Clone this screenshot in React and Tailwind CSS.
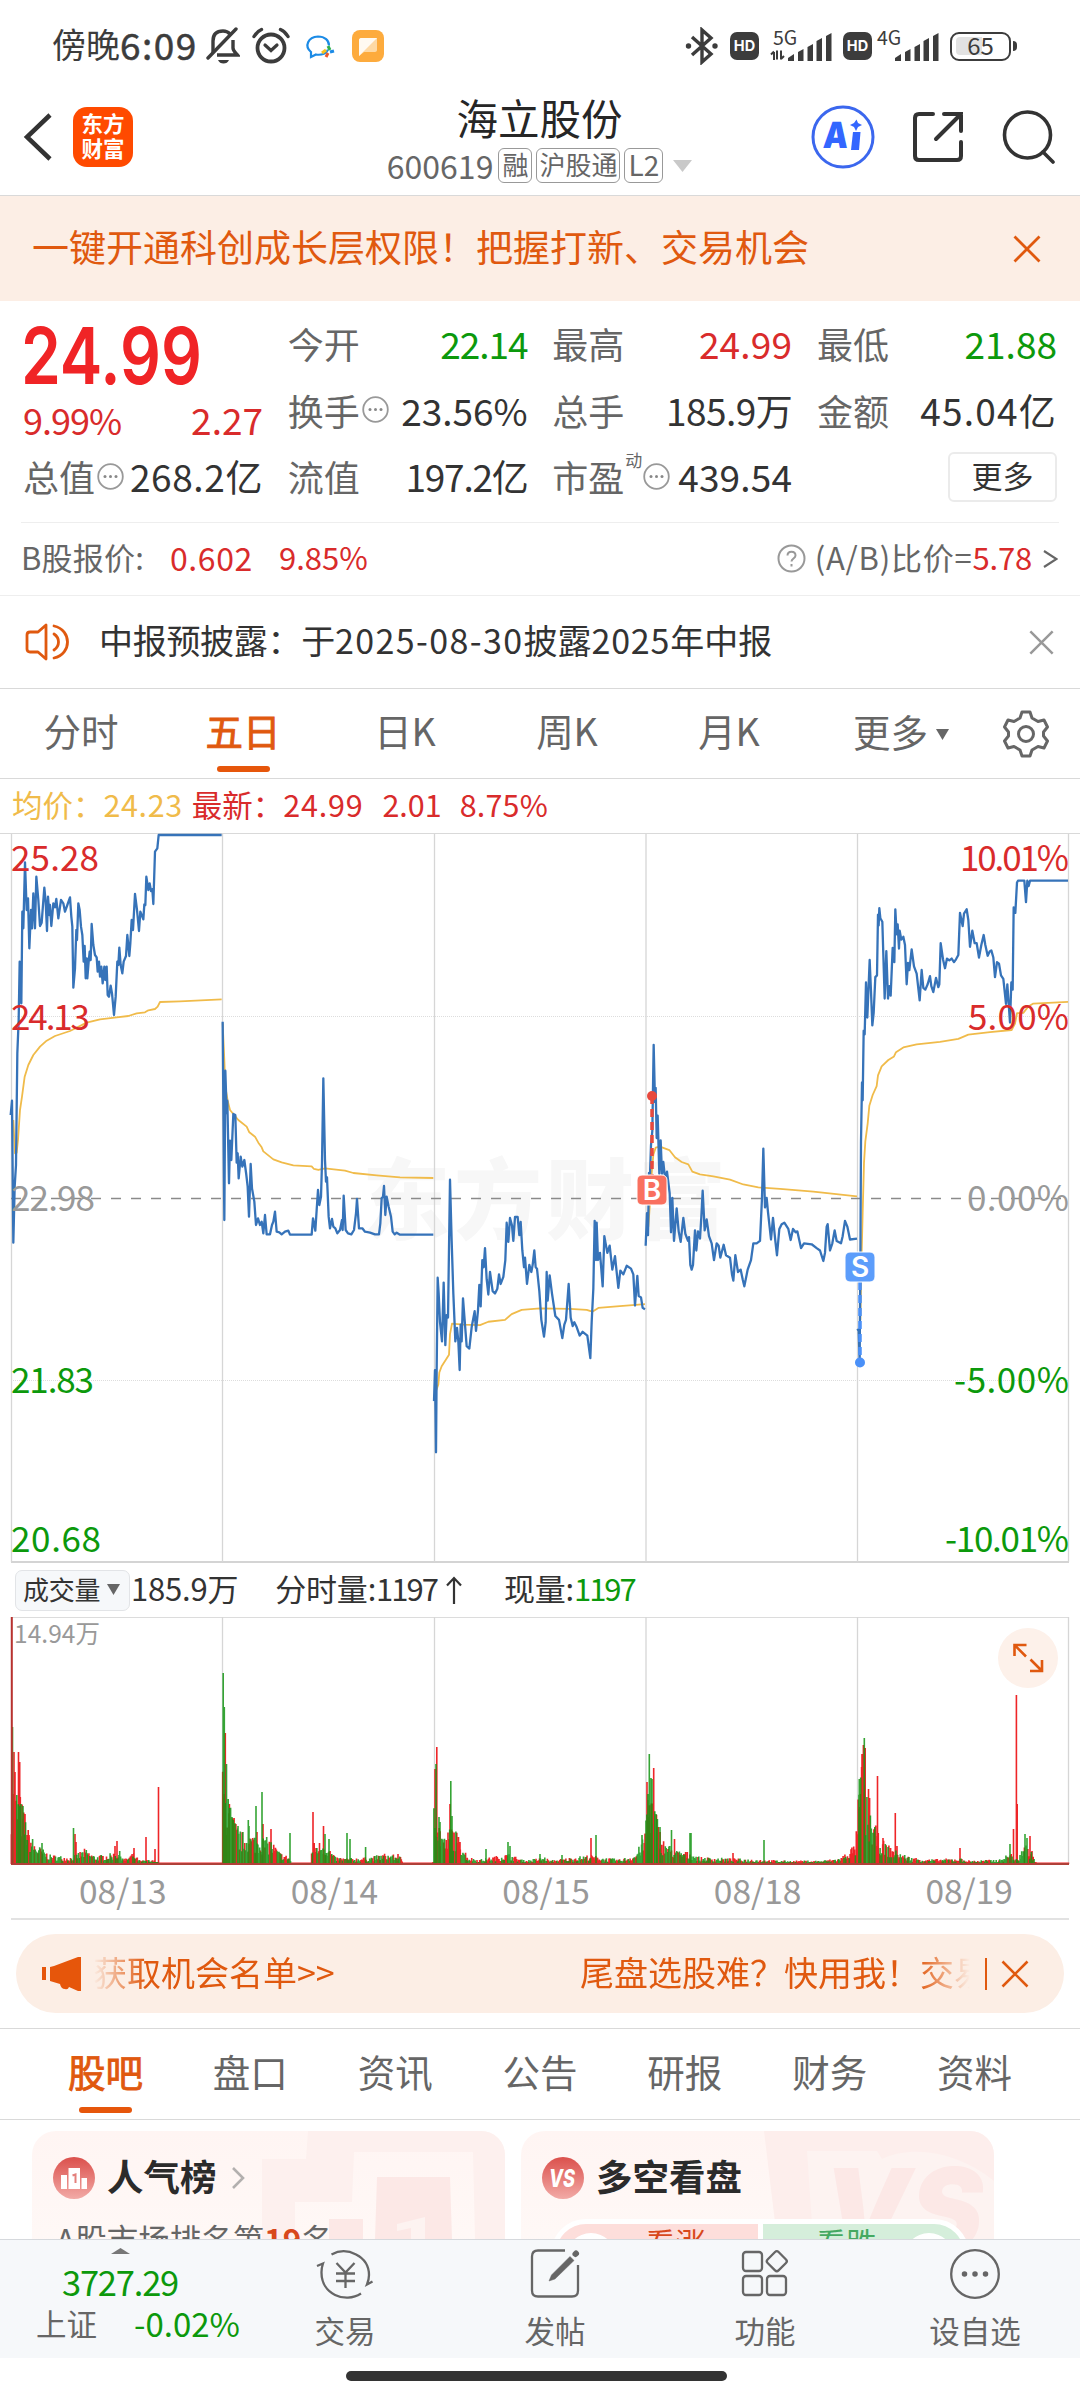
import React from "react";

const RED = "#d92b2b";
const GREEN = "#0c990c";
const GRAY = "#999999";

// Every session is traced in its own units, transform puts it on the 1080 wide chart
const sessions = [
  {
    date: "08/13",
    transform: "translate(0 820) scale(0.33333 0.33333)",
    price:
      "32,885 36,842 40,1268 44,1100 48,1035 52,700 56,600 59,425 64,550 67,275 70,325 75,127 80,270 84,235 88,385 93,270 96,325 100,220 105,325 109,170 115,240 120,318 125,308 133,203 137,245 141,333 144,230 148,285 150,255 154,318 160,250 165,262 169,237 175,295 183,240 190,250 195,275 202,255 210,232 214,290 217,320 220,503 225,445 229,330 231,360 235,250 239,270 243,320 247,345 251,425 254,378 257,475 260,415 262,475 266,425 269,395 272,420 275,312 280,375 285,405 290,412 293,455 297,425 300,470 304,440 308,490 313,440 316,480 320,440 323,525 327,530 332,497 336,520 342,585 347,530 352,425 355,435 358,383 362,435 367,460 371,425 378,408 382,345 388,408 391,370 395,300 399,330 405,222 411,270 417,333 421,275 430,298 433,253 436,255 439,170 445,210 449,190 453,213 457,208 460,252 465,95 472,85 476,45 665,45",
    avg: "40,900 45,1000 50,998 54,960 60,870 66,830 74,770 85,735 100,705 120,680 140,662 165,648 210,633 260,608 300,598 350,592 385,588 410,580 435,577 445,571 465,567 473,560 480,546 540,544 665,538",
  },
  {
    date: "08/14",
    transform: "translate(0 820) scale(0.33333 0.33333)",
    price:
      "668,605 673,1200 676,752 680,880 682,842 687,1090 690,962 694,1020 700,882 706,885 710,1028 713,1000 716,1075 722,1010 727,1040 733,1020 739,1065 743,1100 747,1190 752,1032 756,1105 763,1145 768,1215 774,1195 780,1215 785,1205 790,1240 795,1185 800,1243 810,1243 816,1215 820,1205 825,1175 830,1235 838,1237 845,1243 855,1235 865,1232 870,1244 935,1244 939,1195 946,1232 950,1170 954,1110 958,1155 963,1130 966,1030 970,775 975,1020 978,1085 981,1072 986,1190 990,1225 996,1197 1000,1220 1006,1225 1012,1240 1020,1230 1026,1200 1028,1230 1031,1127 1037,1230 1044,1240 1054,1243 1062,1230 1068,1180 1071,1137 1077,1225 1087,1225 1095,1235 1110,1238 1125,1243 1137,1243 1141,1210 1145,1135 1149,1130 1152,1098 1156,1185 1160,1130 1166,1160 1173,1190 1178,1235 1184,1243 1190,1238 1200,1244 1300,1244",
    avg: "668,610 673,720 676,800 683,842 690,870 700,882 715,900 740,920 748,937 765,950 775,968 785,982 790,994 820,1018 845,1027 880,1036 935,1039 942,1047 955,1050 975,1045 1035,1052 1060,1059 1130,1066 1200,1072 1300,1074",
  },
  {
    date: "08/15",
    transform: "translate(430 820) scale(0.33333 0.47832)",
    price:
      "12,1215 15,1150 18,1322 20,1150 23,957 26,990 30,1050 36,1090 41,967 46,1098 50,1035 54,1040 60,752 65,880 70,990 76,1090 81,1062 85,1090 89,1150 92,1055 95,1090 99,1000 105,1055 110,1100 118,1105 125,1060 134,1027 138,1068 144,1025 148,972 152,1017 157,920 161,935 165,895 170,960 175,992 180,945 188,985 195,990 202,980 207,950 212,970 220,955 226,920 230,842 235,882 240,832 246,848 250,880 255,830 263,830 268,868 272,840 277,900 282,935 285,915 291,970 298,930 304,945 308,930 313,900 317,935 321,938 328,985 334,1045 342,1080 347,1050 350,945 353,1005 359,952 366,990 376,1037 387,1045 397,1083 403,1055 408,1045 416,970 422,1040 428,1058 433,1050 440,1060 449,1078 458,1070 472,1078 481,1125 485,1050 490,980 494,838 498,920 500,842 504,920 510,905 518,975 523,870 532,905 539,890 547,940 555,912 565,978 571,942 580,950 590,932 603,938 610,950 615,1015 622,953 626,995 633,998 638,1020 645,1023",
    avg: "14,1200 20,1190 25,1180 28,1155 35,1142 48,1128 57,1118 60,1075 66,1053 100,1055 150,1056 175,1049 225,1045 245,1033 275,1024 330,1021 420,1022 470,1024 487,1028 505,1020 560,1017 645,1012",
  },
  {
    date: "08/18",
    transform: "translate(430 820) scale(0.33333 0.47832)",
    price:
      "647,890 651,822 654,868 657,738 660,740 663,680 667,650 671,470 675,590 677,560 680,665 683,618 688,740 692,670 696,740 700,715 706,755 711,735 719,780 723,862 727,790 732,880 740,812 746,860 752,882 760,832 766,865 774,880 777,872 781,930 785,940 789,930 795,858 799,900 804,860 810,875 814,830 818,775 824,858 830,835 837,870 845,885 852,920 860,885 866,890 871,915 881,888 888,910 900,915 906,950 910,963 916,910 924,945 932,940 938,960 943,975 953,940 963,920 970,885 980,885 990,880 996,790 1000,687 1005,810 1010,790 1014,820 1023,877 1029,832 1036,880 1041,910 1048,855 1055,845 1063,842 1075,855 1082,878 1089,855 1097,862 1102,860 1113,895 1122,885 1145,887 1160,895 1170,900 1180,922 1185,905 1190,850 1193,845 1200,900 1207,885 1214,858 1220,880 1233,885 1238,870 1245,838 1252,850 1260,877 1281,875",
    avg: "655,850 660,800 665,740 670,700 677,685 690,683 718,690 735,705 755,715 775,720 787,735 810,741 850,745 900,752 940,762 985,768 1050,771 1150,777 1281,787",
  },
  {
    date: "08/19",
    transform: "translate(640 820) scale(0.33333 0.35714)",
    price:
      "652,1425 656,1430 659,1515 661,1250 663,900 666,735 668,785 671,590 674,600 678,455 682,553 689,392 693,480 697,575 701,540 706,440 711,435 714,265 716,295 718,247 721,275 727,285 734,500 739,367 744,500 748,465 752,492 758,358 763,398 766,250 770,320 773,292 777,360 779,310 784,335 790,327 795,350 800,460 804,400 808,420 815,362 822,410 830,430 839,505 845,420 850,470 856,475 863,460 870,437 874,465 880,482 888,442 895,468 898,460 902,345 909,390 915,415 921,388 928,393 935,388 942,398 948,390 955,378 960,260 968,297 972,262 980,250 985,280 990,355 997,310 1004,345 1010,345 1017,385 1024,350 1031,322 1036,350 1043,380 1049,368 1054,365 1060,385 1065,440 1071,398 1077,402 1083,435 1090,445 1098,515 1102,460 1110,567 1114,455 1118,475 1121,245 1126,260 1131,175 1134,170 1153,170 1158,230 1162,170 1166,185 1170,170 1284,170",
    avg: "661,1400 664,1250 668,1100 672,960 676,900 683,850 688,800 698,770 710,745 714,715 725,690 745,672 762,662 768,650 790,637 830,628 900,621 955,613 985,601 1050,594 1115,588 1125,570 1131,541 1150,540 1165,522 1180,514 1284,509",
  },
];

const axisLabels = [
  { y: 871, left: "25.28", leftWidth: 88, right: "10.01%", rightWidth: 109, color: RED },
  { y: 1030, left: "24.13", leftWidth: 79, right: "5.00%", rightWidth: 101, color: RED },
  { y: 1211, left: "22.98", leftWidth: 84, right: "0.00%", rightWidth: 102, color: GRAY },
  { y: 1393, left: "21.83", leftWidth: 83, right: "-5.00%", rightWidth: 115, color: GREEN },
  { y: 1552, left: "20.68", leftWidth: 90, right: "-10.01%", rightWidth: 124, color: GREEN },
];

// [x, height] outline of the small volume bars
const volumeShape = [
  [11, 75], [20, 60], [28, 30], [35, 18], [50, 8], [70, 6], [85, 13], [95, 7], [110, 9], [120, 11], [125, 4], [133, 10], [140, 3], [152, 4], [159, 1], [222, 1],
  [222.5, 80], [232, 45], [240, 28], [260, 24], [270, 22], [280, 10], [290, 6], [291, 1], [311, 1], [312, 18], [325, 20], [335, 6], [350, 5], [370, 6], [385, 9], [400, 7], [403, 1], [433, 1],
  [434, 80], [438, 40], [445, 22], [452, 35], [462, 18], [468, 6], [480, 4], [508, 9], [525, 3], [545, 6], [550, 3], [590, 8], [600, 6], [620, 4], [635, 8], [645, 25],
  [646, 60], [650, 70], [655, 50], [662, 22], [675, 12], [690, 10], [700, 6], [730, 5], [760, 4], [780, 3], [820, 3], [840, 5], [856, 18],
  [857, 50], [862, 90], [868, 50], [880, 22], [895, 12], [910, 6], [930, 4], [960, 5], [970, 3], [1000, 4], [1010, 10], [1018, 3], [1024, 20], [1033, 8], [1036, 1], [1069, 1],
];

// [x, height, r | g]
const volumeSpikes = [
  [12.5, 137, "g"], [14, 112, "r"], [15, 92, "r"], [18.5, 112, "r"], [19.7, 102, "r"], [21, 60, "g"], [23, 58, "g"], [25, 50, "r"], [27, 29, "r"], [29, 29, "r"], [42, 21, "g"], [73.5, 36, "g"], [75, 30, "r"], [76, 22, "r"], [117, 23, "r"], [115, 18, "r"], [134, 16, "r"], [146, 27, "r"], [155, 15, "r"], [158.5, 77, "r"],
  [223.2, 191, "g"], [224.3, 157, "g"], [225.3, 131, "r"], [226.5, 100, "g"], [228.2, 65, "g"], [229.4, 60, "r"], [232, 47, "g"], [238, 38, "g"], [248.3, 44, "g"], [249, 38, "g"], [256, 58, "g"], [257, 32, "r"], [262, 72, "g"], [263, 40, "r"], [271, 35, "r"], [290, 31, "g"], [313, 52, "r"], [323.5, 38, "r"], [325, 30, "g"], [329, 25, "g"], [347, 31, "g"], [350, 25, "g"], [365.6, 17, "g"], [398, 10, "r"],
  [435, 95, "r"], [436, 100, "g"], [436.8, 117, "r"], [439, 47, "g"], [440, 42, "g"], [450.8, 83, "g"], [450, 60, "r"], [452, 48, "g"], [460, 22, "r"], [486, 15, "g"], [508, 22, "g"], [510, 18, "g"], [540, 10, "g"], [562, 9, "g"], [591, 26, "r"], [596, 29, "g"], [642, 29, "g"], [645, 30, "r"],
  [647, 82, "r"], [648, 70, "g"], [649.3, 110, "g"], [651, 86, "g"], [652, 85, "g"], [653.7, 96, "r"], [656, 50, "g"], [660, 37, "g"], [671.5, 34, "g"], [674.5, 25, "r"], [690, 31, "g"], [691, 31, "g"], [733, 11, "r"], [764, 24, "g"],
  [858.5, 55, "r"], [859.3, 85, "g"], [860.5, 70, "r"], [862, 110, "r"], [863.4, 119, "r"], [864.3, 126, "g"], [865.2, 116, "r"], [868.5, 75, "r"], [869.6, 66, "r"], [875, 36, "r"], [877.5, 88, "r"], [883, 26, "r"], [895.3, 51, "r"], [897, 18, "r"], [960, 16, "r"], [1010, 20, "g"], [1013.5, 35, "r"], [1016.4, 169, "r"], [1017.2, 60, "r"], [1025, 30, "g"], [1027, 26, "g"], [1030, 28, "r"], [1032, 13, "r"],
];

const volumeHeight = (x) => {
  for (let i = 1; i < volumeShape.length; i++) {
    const [x0, h0] = volumeShape[i - 1];
    const [x1, h1] = volumeShape[i];
    if (x <= x1) return h0 + ((h1 - h0) * (x - x0)) / (x1 - x0 || 1);
  }
  return 1;
};

const buildVolume = () => {
  const bars = { r: "", g: "" };
  let seed = 7;
  const random = () => {
    seed = (seed * 16807) % 2147483647;
    return seed / 2147483647;
  };
  for (let x = 11.5; x < 1069; x += 0.88) {
    const base = volumeHeight(x);
    const flat = base <= 1.2;
    const height = flat ? 1.5 : Math.max(2, base * (0.4 + random() * 0.8));
    const color = flat || random() > 0.5 ? "r" : "g";
    bars[color] += `M${x.toFixed(1)} 1864V${(1864 - height).toFixed(1)}`;
  }
  volumeSpikes.forEach(([x, height, color]) => {
    bars[color] += `M${x} 1864V${1864 - height}`;
  });
  return bars;
};

const volume = buildVolume();
const gridX = [11.5, 222.5, 434.5, 646, 857.5, 1068.5];

const MoreDots = () => (
  <svg width="27" height="27" viewBox="0 0 27 27" fill="none" className="ml-[2px] shrink-0">
    <circle cx="13.5" cy="13.5" r="12.3" stroke="#999" strokeWidth="1.8" />
    <circle cx="8" cy="13.5" r="1.5" fill="#888" />
    <circle cx="13.5" cy="13.5" r="1.5" fill="#888" />
    <circle cx="19" cy="13.5" r="1.5" fill="#888" />
  </svg>
);

const Close = ({ size, color, width = 2.6 }) => (
  <svg width={size} height={size} viewBox="0 0 28 28" fill="none" stroke={color} strokeWidth={width}>
    <path d="M1.5 1.5 26.5 26.5M26.5 1.5 1.5 26.5" />
  </svg>
);

const Signal = ({ label, data }) => (
  <svg width="62" height="36" viewBox="0 0 62 36" fill="#3c3c3c" className="overflow-visible">
    <text x={data ? 3 : 0} y="16.5" fontSize="19.5" className="font-['Noto_Sans_CJK_SC']">
      {label}
    </text>
    {data && <path d="M4 24v8M7 22.5v9M11 22.5v9M1 26.500l3-3M11 31l3-3" stroke="#3c3c3c" strokeWidth="2" />}
    <path d="M18 33v-3l6-4v7zM28 33v-9l5.500-3v12zM37.500 33V19l5.500-3v17zM46.500 33V13l5.500-3v23zM56 33V8l5.500-3v28z" />
  </svg>
);

const HdBadge = () => (
  <span className="flex h-[28px] w-[29px] items-center justify-center rounded-[7px] bg-[#3c3c3c] font-['Inter'] text-[14.5px] leading-none font-bold text-white">
    HD
  </span>
);

const StatusBar = () => (
  <div className="flex h-[92px] items-center justify-between pr-[63px] pl-[52px] text-[#3c3c3c]">
    <div className="flex items-center">
      <span className="pb-[4px] text-[34px] leading-none">傍晚</span>
      <span className="pb-[3px] text-[37px] leading-none tracking-[1.500px] [-webkit-text-stroke:0.500px]">6:09</span>
      <svg width="34" height="38" viewBox="0 0 34 38" fill="none" stroke="#3c3c3c" strokeWidth="3.400" className="ml-[8px]">
        <path d="M7 26V14C7 7 11 4 17 4c3 0 5 .8 7 3M27 13v8c0 3 3 5 4.500 7H11" />
        <path d="M30 2 2 31" strokeLinecap="round" />
        <path d="M12 33h11c-1 2.500-3 3.500-5.500 3.500S13 35.500 12 33z" fill="#3c3c3c" stroke="none" />
      </svg>
      <svg width="38" height="38" viewBox="0 0 38 38" fill="none" stroke="#3c3c3c" className="ml-[12px]">
        <circle cx="19" cy="21" r="13.500" strokeWidth="3.800" />
        <path d="m13 18 6 5.500L25 18" strokeWidth="3.200" strokeLinecap="round" />
        <path d="M2 9.500C4 6 6 4 9.500 2.500M36 9.500C34 6 32 4 28.500 2.500" strokeWidth="3.400" strokeLinecap="round" />
      </svg>
      <svg width="34" height="34" viewBox="0 0 34 34" fill="none" className="ml-[14px]">
        <path d="M24 20.500C23 24 18 26.500 12 25.500L7 28V23C0 17 4 8 14 7.500c7 0 11 4 11 9" stroke="#1c8be6" strokeWidth="2.200" />
        <path d="m24 17 2 4" stroke="#2fae4e" strokeWidth="3" />
        <path d="m18 24 4-3" stroke="#f6c21c" strokeWidth="3" />
        <path d="m22 28 2-4" stroke="#ee5a28" strokeWidth="3" />
        <path d="m26 23 4-1" stroke="#1c8be6" strokeWidth="3" />
      </svg>
      <svg width="32" height="32" viewBox="0 0 32 32" className="ml-[14px]">
        <rect width="32" height="32" rx="8" fill="#fdab3d" />
        <path d="M9 8h16v12c0 1-1 2-2 2H12l-5 4V10c0-1 1-2 2-2z" fill="#fed9a4" />
        <path d="M9 8h16L7 26V10c0-1 1-2 2-2z" fill="#fffaf2" />
      </svg>
    </div>
    <div className="flex items-center">
      <svg width="34" height="38" viewBox="0 0 34 38" fill="none" stroke="#3c3c3c" strokeWidth="3.400">
        <path d="m7 10 19 17-9 8V3l9 8L7 28" />
        <circle cx="3.500" cy="19" r="2.700" fill="#3c3c3c" stroke="none" />
        <circle cx="30" cy="19" r="2.700" fill="#3c3c3c" stroke="none" />
      </svg>
      <span className="mr-[11px] ml-[11px]">
        <HdBadge />
      </span>
      <Signal label="5G" data />
      <span className="mr-[5px] ml-[11px]">
        <HdBadge />
      </span>
      <Signal label="4G" />
      <div className="relative ml-[11px] flex h-[29px] w-[61px] items-center justify-center rounded-[9px] border-[2.500px] border-[#3c3c3c]">
        <span className="absolute top-[3px] left-[4px] h-[18px] w-[26px] rounded-l-[4px] bg-[#e2e2e2]" />
        <span className="relative pb-[3px] text-[24px] leading-none">65</span>
      </div>
      <span className="ml-[2px] h-[10px] w-[4px] rounded-r bg-[#3c3c3c]" />
    </div>
  </div>
);

const Header = () => (
  <div className="grid h-[104px] grid-cols-[1fr_auto_1fr] items-center border-b border-[#d9d9d9] pr-[24px] pl-[23px]">
    <div className="flex items-center pb-[14px]">
      <svg width="29" height="48" viewBox="0 0 29 48" fill="none" stroke="#333" strokeWidth="4.500">
        <path d="M27 2 4 24l23 22" />
      </svg>
      <div className="ml-[21px] flex h-[60px] w-[60px] flex-col items-center justify-center rounded-[14px] bg-[#ff4a00] pb-[3px] text-[21.500px] leading-[25px] font-bold text-white">
        <span>东方</span>
        <span>财富</span>
      </div>
    </div>
    <div className="flex flex-col items-center pb-[14px]">
      <h1 className="text-[41.500px] leading-[50px] text-[#262626]">海立股份</h1>
      <div className="mt-[6px] -mb-[2px] flex items-center text-[#666]">
        <span className="pb-[1px] text-[32px] leading-[34px]">600619</span>
        <span className="ml-[5px] flex h-[35px] items-center rounded-[6px] border-[1.500px] border-[#999] px-[3px] pb-[3px] text-[26px] leading-none">融</span>
        <span className="ml-[4px] flex h-[35px] items-center rounded-[6px] border-[1.500px] border-[#999] px-[2px] pb-[3px] text-[26px] leading-none">沪股通</span>
        <span className="ml-[4px] flex h-[35px] items-center rounded-[6px] border-[1.500px] border-[#999] px-[3px] pb-[3px] text-[28px] leading-none">L2</span>
        <svg width="19" height="12" viewBox="0 0 19 12" fill="#c9c9c9" className="ml-[10px]">
          <path d="M0 0h19l-9.500 12z" />
        </svg>
      </div>
    </div>
    <div className="flex items-center justify-end pb-[14px]">
      <svg width="64" height="64" viewBox="0 0 64 64">
        <circle cx="32" cy="32" r="30" fill="none" stroke="#3b67ee" strokeWidth="3" />
        <g transform="skewX(-4)">
          <text x="14.500" y="43.500" fontSize="36" textLength="25" lengthAdjust="spacingAndGlyphs" className="font-['Inter'] font-black" fill="#3366ff">
            A
          </text>
        </g>
        <path d="M42 27h7.500l-1.500 18h-8z" fill="#3366ff" />
        <path d="m45.500 14.500 1.500 3.500 4 2-4 2-2 4-2-4-4-2 4-2z" fill="#3366ff" />
      </svg>
      <svg width="52" height="52" viewBox="0 0 52 52" fill="none" stroke="#333" strokeWidth="4" className="ml-[37px]">
        <path d="M21 3H7Q3 3 3 7v38q0 4 4 4h38q4 0 4-4V31M32 3h17v17M49 3 24 28" strokeLinecap="round" />
      </svg>
      <svg width="54" height="54" viewBox="0 0 54 54" fill="none" stroke="#333" strokeWidth="3.600" className="ml-[38px]">
        <circle cx="25.500" cy="25" r="23" />
        <path d="m41 42 10 10" strokeLinecap="round" />
      </svg>
    </div>
  </div>
);

const Stat = ({ label, value, className = "text-[#333]", icon, sup }) => (
  <div className="flex items-center justify-between">
    <span className="flex items-center text-[#666]">
      {label}
      {sup && <sup className="-top-[17px] -mr-[1px] ml-[1px] text-[17px] leading-none">{sup}</sup>}
      {icon && <MoreDots />}
    </span>
    <span className={`text-[37px] ${className}`}>{value}</span>
  </div>
);

const Quote = () => (
  <div className="h-[221px] px-[23px] pt-[9px]">
    <div className="grid grid-cols-[240px_240px_240px_240px] justify-between text-[36px] leading-[66px]">
      <div className="row-span-2 flex flex-col">
        <div className="h-[85px]">
          <span className="-ml-[2px] inline-block origin-left scale-x-[0.82] font-['Inter'] text-[78px] leading-[92px] font-semibold text-[#f02426]">
            24.99
          </span>
        </div>
        <div className="flex h-[48px] items-center justify-between leading-[48px] text-[#d92b2b]">
          <span className="tracking-[-1px]">9.99%</span>
          <span className="text-[37px]">2.27</span>
        </div>
      </div>
      <Stat label="今开" value="22.14" className="tracking-[-1px] text-[#0c990c]" />
      <Stat label="最高" value="24.99" className="tracking-[0.200px] text-[#d92b2b]" />
      <Stat label="最低" value="21.88" className="text-[#0c990c]" />
      <Stat label="换手" value="23.56%" className="text-[#333]" icon />
      <Stat label="总手" value="185.9万" className="tracking-[-0.500px] text-[#333]" />
      <Stat label="金额" value="45.04亿" className="tracking-[1.200px] text-[#333]" />
      <Stat label="总值" value="268.2亿" className="tracking-[0.600px] text-[#333]" icon />
      <Stat label="流值" value="197.2亿" className="tracking-[-1.200px] text-[#333]" />
      <Stat label="市盈" value="439.54" className="tracking-[0.200px] text-[#333]" sup="动" icon />
      <div className="flex items-center justify-end pt-[2px]">
        <button className="h-[50px] w-[109px] rounded-[6px] border-2 border-[#ebebeb] pb-1 text-[31px] leading-[42px] text-[#333]">更多</button>
      </div>
    </div>
  </div>
);

const BShare = () => (
  <div className="flex h-[73px] items-center justify-between border-b border-[#eee] pr-[22px] pb-[5px] pl-[21px] text-[31px] leading-none text-[#666]">
    <div className="flex items-center">
      <span className="tracking-[0.200px]">B股报价:</span>
      <span className="ml-[26px] text-[32px] tracking-[0.600px] text-[#d92b2b]">0.602</span>
      <span className="ml-[26px] text-[#d92b2b]">9.85%</span>
    </div>
    <div className="flex items-center">
      <svg width="29" height="29" viewBox="0 0 29 29" fill="none" stroke="#999" strokeWidth="2" className="mt-[3px]">
        <circle cx="14.500" cy="14.500" r="13" />
        <path d="M10.500 11.500c0-5 8-5 8 0 0 3-4 3-4 6M14.500 20v2.500" />
      </svg>
      <span className="ml-[9px] tracking-[0.800px]">(A/B)比价=</span>
      <span className="tracking-[-0.200px] text-[#d92b2b]">5.78</span>
      <svg width="15" height="18" viewBox="0 0 15 18" fill="none" stroke="#666" strokeWidth="2.200" className="mt-1 ml-[11px]">
        <path d="m1 1 12.500 8L1 17" />
      </svg>
    </div>
  </div>
);

const Notice = () => (
  <div className="flex h-[93px] items-center border-b border-[#d9d9d9] pr-[26px] pl-[25px]">
    <svg width="46" height="38" viewBox="0 0 46 38" fill="none" stroke="#e0590f" strokeWidth="2.800" strokeLinecap="round" strokeLinejoin="round">
      <path d="M21 2v34l-8-7H5q-3 0-3-3V12q0-3 3-3h8z" />
      <path d="M29 11c6 4 6 12 0 16M29 3c18 4 18 28 0 32" />
    </svg>
    <p className="ml-[28px] pb-[4px] text-[34px] leading-none text-[#333]">
      <span className="tracking-[-0.300px]">中报预披露：于</span>
      <span className="tracking-[1.400px]">2025-08-30</span>披露<span className="tracking-[0.800px]">2025</span>年中报
    </p>
    <span className="ml-auto">
      <Close size={25} color="#999" width={2.8} />
    </span>
  </div>
);

const PeriodTabs = () => (
  <div className="flex h-[90px] items-center border-b border-[#d9d9d9] text-[37.500px] leading-[50px] text-[#666]">
    {["分时", "五日", "日K", "周K", "月K"].map((tab) => (
      <div
        key={tab}
        className={`flex h-full w-[162px] flex-col items-center pt-[16px] ${tab === "五日" ? "text-[#e0590f] [-webkit-text-stroke:0.900px]" : ""}`}
      >
        {tab}
        {tab === "五日" && <span className="mt-[11px] h-[6px] w-[53px] rounded-full bg-[#e6560b]" />}
      </div>
    ))}
    <div className="ml-[43px] flex items-center pb-[6px]">
      更多
      <svg width="13" height="11" viewBox="0 0 13 11" fill="#666" className="mt-[7px] ml-[8px]">
        <path d="M0 0h13L6.500 11z" />
      </svg>
    </div>
    <svg width="46" height="48" viewBox="0 0 46 48" fill="none" stroke="#666" strokeWidth="3" strokeLinejoin="round" className="mr-[31px] ml-auto">
      <path d="M19 2h8l2 6 6 3.500 6-1.500 3.500 7-4 5v4l4 5-3.500 7-6-1.500-6 3.500-2 6h-8l-2-6-6-3.500-6 1.500L1.500 31l4-5v-4l-4-5L5 10l6 1.500L17 8z" />
      <circle cx="23" cy="24" r="7.500" />
    </svg>
  </div>
);

const PriceChart = () => (
  <svg width="1080" height="730" viewBox="0 833 1080 730" className="block font-['Noto_Sans_CJK_SC']">
    <text x="362" y="1232" fontSize="88" textLength="364" className="font-black" fill="#f7f7f7">
      东方财富
    </text>
    <path d="M0 833.500H1080" stroke="#d9d9d9" strokeWidth="1" />
    <path d="M11 1562H1069" stroke="#d4d4d4" strokeWidth="2" />
    <path d="M11 1016.500H1069M11 1380.500H1069" stroke="#ddd" strokeWidth="1" strokeDasharray="1 1" />
    {gridX.map((x) => (
      <path key={x} d={`M${x} 834V1562`} stroke="#d6d6d6" strokeWidth="1.300" />
    ))}
    <path d="M11 1198.500H1069" stroke="#8a8a8a" strokeWidth="1.500" strokeDasharray="10 10" />
    <g fill="none" strokeLinejoin="round">
      {sessions.map((s) => (
        <g key={s.date} transform={s.transform}>
          <polyline points={s.avg} stroke="#f0bb4a" strokeWidth="1.800" vectorEffect="non-scaling-stroke" />
          <polyline points={s.price} stroke="#3673b9" strokeWidth="2.300" vectorEffect="non-scaling-stroke" />
        </g>
      ))}
    </g>
    {axisLabels.map((l) => (
      <g key={l.left} fill={l.color} fontSize="35">
        <text x="11" y={l.y} textLength={l.leftWidth}>
          {l.left}
        </text>
        <text x={1069 - l.rightWidth} y={l.y} textLength={l.rightWidth}>
          {l.right}
        </text>
      </g>
    ))}
    {/* buy / sell marks */}
    <path d="M652 1096V1176" stroke="#e8493e" strokeWidth="3.500" strokeDasharray="8 5" />
    <circle cx="652" cy="1096" r="5" fill="#e8493e" />
    <rect x="637" y="1175" width="30" height="30" rx="5" fill="#f9705f" stroke="#fff" strokeWidth="1" />
    <text x="652" y="1200" textAnchor="middle" fontSize="28" className="font-['Inter'] font-semibold" fill="#fff">
      B
    </text>
    <path d="M860 1282V1362" stroke="#4a90f8" strokeWidth="3.500" strokeDasharray="8 5" />
    <circle cx="860" cy="1362.500" r="5" fill="#4a90f8" />
    <rect x="845" y="1252" width="30" height="30" rx="5" fill="#5c9dfb" stroke="#fff" strokeWidth="1" />
    <text x="860" y="1277" textAnchor="middle" fontSize="28" className="font-['Inter'] font-semibold" fill="#fff">
      S
    </text>
  </svg>
);

const VolumeHeader = () => (
  <div className="flex h-[54px] items-center pl-[15px] text-[31px] leading-none tracking-[-0.200px] text-[#333]">
    <div className="flex h-[41px] w-[115px] items-center rounded-[7px] border border-[#e2e4e7] bg-[#f6f8fa] pb-[3px] pl-[7px] text-[26px]">
      成交量
      <svg width="13" height="11" viewBox="0 0 13 11" fill="#666" className="mt-[2px] ml-[7px]">
        <path d="M0 0h13L6.500 11z" />
      </svg>
    </div>
    <span className="ml-[1px] pb-[5px]">185.9万</span>
    <span className="ml-[37px] pb-[5px]">分时量:</span>
    <span className="pb-[5px] tracking-[-2px]">1197</span>
    <svg width="16" height="28" viewBox="0 0 16 28" fill="none" stroke="#333" strokeWidth="2.200" className="ml-[9px]">
      <path d="M8 28V2M1 9.500 8 2l7 7.500" />
    </svg>
    <span className="ml-[42px] pb-[5px]">现量:</span>
    <span className="pb-[5px] tracking-[-2px] text-[#0c990c]">1197</span>
  </div>
);

const VolumeChart = () => (
  <svg width="1080" height="249" viewBox="0 1617 1080 249" className="block font-['Noto_Sans_CJK_SC']">
    <path d="M11 1617.500H1069" stroke="#dcdcdc" />
    {gridX.map((x) => (
      <path key={x} d={`M${x} 1617V1864`} stroke="#d6d6d6" strokeWidth="1.300" />
    ))}
    <path d={volume.r} stroke="#ee2528" strokeWidth="1.600" />
    <path d={volume.g} stroke="#129512" strokeWidth="1.600" opacity="0.850" />
    <path d="M11 1864H1069" stroke="#b04038" strokeWidth="2" />
    <path d="M11.800 1617V1864" stroke="#b8322f" strokeWidth="2" />
    <text x="14" y="1643" fontSize="24.500" textLength="86" fill="#999">
      14.94万
    </text>
    <circle cx="1028" cy="1658" r="30" fill="#fdf1ea" />
    <path d="M1014.500 1656v-11h12M1015 1645.500l11 11M1042 1660v11h-12M1041.500 1670.500l-11-11" fill="none" stroke="#e0590f" strokeWidth="2.600" />
  </svg>
);

const Marquee = () => (
  <div className="mx-[16px] mt-[14px] flex h-[79px] items-center rounded-full bg-[#fceee5] pl-[26px] text-[34px] leading-none text-[#e0590f]">
    <svg width="40" height="34" viewBox="0 0 40 34" fill="#e6560b">
      <path d="M0 10h4v13H0zM8 10l4-1L36 0h3v34h-3l-9-4q-1 3-4 2-4 0-5-5L8 24z" />
    </svg>
    <div className="ml-[11px] flex flex-1 justify-between overflow-hidden mask-r-from-94% mask-l-from-94% pb-[3px] whitespace-nowrap">
      <span className="leading-[46px]">获取机会名单&gt;&gt;</span>
      <span className="-mr-[18px] leading-[46px]">尾盘选股难？快用我！交易</span>
    </div>
    <span className="mr-[14px] ml-[15px] h-[32px] w-[2px] bg-[#e0590f]" />
    <span className="mr-[35px]">
      <Close size={28} color="#e0590f" />
    </span>
  </div>
);

const InfoTabs = () => (
  <div className="mt-[15px] flex h-[92px] border-y border-[#d9d9d9] px-[33px] text-[37.500px] leading-[50px] text-[#666]">
    {["股吧", "盘口", "资讯", "公告", "研报", "财务", "资料"].map((tab) => (
      <div
        key={tab}
        className={`flex flex-1 flex-col items-center pt-[17px] ${tab === "股吧" ? "text-[#e0590f] [-webkit-text-stroke:0.900px]" : ""}`}
      >
        {tab}
        {tab === "股吧" && <span className="mt-[11px] h-[6px] w-[53px] rounded-full bg-[#e6560b]" />}
      </div>
    ))}
  </div>
);

const Cards = () => (
  <div className="flex h-[119px] gap-[16px] overflow-hidden pt-[11px] pl-[32px] text-[#2b2b2b]">
    <div className="relative h-[200px] w-[473px] overflow-hidden rounded-[24px] bg-linear-to-b from-[#fff5f3] to-[#fffbf9]">
      <svg width="473" height="108" viewBox="0 0 473 108" className="absolute inset-0">
        <path d="M276 0H473V108H443L441 21H322L320 71H263V108H230V28H274z" fill="#fdf0ee" />
        <path d="M345 46h73l2 62h-77z" fill="#fce8e6" />
        <path d="M297 88h34v20h-34z" fill="#fce8e6" />
        <path d="M365 93l28-7v22h-14V97l-14 3z" fill="#fdf3f1" />
      </svg>
      <div className="relative flex items-center pt-[22px] pl-[21px]">
        <svg width="42" height="42" viewBox="0 0 42 42">
          <defs>
            <linearGradient id="badge" x1="0" y1="0" x2="0" y2="1">
              <stop offset="0" stopColor="#db504c" />
              <stop offset="1" stopColor="#f2aaa6" />
            </linearGradient>
          </defs>
          <circle cx="21" cy="21" r="21" fill="url(#badge)" />
          <path d="M8 18h6v14H8zM15.500 11H27v21H15.500zM28.500 21H34v11h-5.500z" fill="#fff" />
          <path d="m19.500 18.500 3-1V26" fill="none" stroke="#e4807c" strokeWidth="2" />
        </svg>
        <span className="ml-[12px] pb-[4px] text-[36.500px] leading-[46px] font-bold">人气榜</span>
        <svg width="14" height="22" viewBox="0 0 14 22" fill="none" stroke="#b3b0af" strokeWidth="2.600" className="ml-[14px]">
          <path d="m2 1 10 10L2 21" />
        </svg>
      </div>
      <p className="relative mt-[13px] pl-[24px] text-[31.500px] leading-[44px] text-[#666]">
        A股市场排名第<b className="text-[#d8481c]">19</b>名
      </p>
    </div>
    <div className="relative h-[200px] w-[473px] overflow-hidden rounded-[24px] bg-linear-to-b from-[#fff5f3] to-[#fffbf9]">
      <svg width="473" height="108" viewBox="0 0 473 108" className="absolute inset-0">
        <path d="M243 0H473V108H256z" fill="#fdeeec" />
        <path d="M286 20h70l5 8c30-14 75-8 112 22v58H292z" fill="#fdf3f1" />
        <text x="302" y="118" fontSize="112" textLength="160" lengthAdjust="spacingAndGlyphs" className="font-['Inter'] font-black italic" fill="#fce8e6">
          VS
        </text>
      </svg>
      <div className="relative flex items-center pt-[22px] pl-[21px]">
        <svg width="42" height="42" viewBox="0 0 42 42">
          <circle cx="21" cy="21" r="21" fill="url(#badge)" />
          <text x="7" y="30" fontSize="25" textLength="26" lengthAdjust="spacingAndGlyphs" className="font-['Inter'] font-extrabold italic" fill="#fff">
            VS
          </text>
        </svg>
        <span className="ml-[12px] pb-[4px] text-[36.500px] leading-[46px] font-bold">多空看盘</span>
      </div>
      <div className="relative mt-[16px] ml-[30px] flex h-[70px] w-[418px] gap-[5px] overflow-hidden rounded-full border-[5px] border-white bg-white text-[30.500px] leading-[36px]">
        <div className="w-1/2 bg-[#fddedb] pl-[89px] text-[#d8481c]">看涨</div>
        <div className="w-1/2 bg-[#d5eedb] pl-[53px] text-[#45a962]">看跌</div>
        <span className="absolute top-[9px] left-[10px] h-[50px] w-[50px] rounded-full bg-white" />
        <span className="absolute top-[9px] right-[10px] h-[50px] w-[50px] rounded-full bg-white" />
      </div>
    </div>
  </div>
);

const navItems = [
  {
    label: "交易",
    icon: (
      <>
        <path d="M12.500 6.500C28 -2 50 8 50 27c0 4-1 7-2 9.500l5.500-3M42 45.500C26 56 2 46 2.500 24c0-3 .5-5.500 1.500-8.500l-6 2.500" />
        <path d="m17.500 15 9 9.500 9-9.500M17 25.500h19M17 33h19M26.500 25v15" />
      </>
    ),
  },
  {
    label: "发帖",
    icon: (
      <>
        <path d="M36 2.500H9Q3 2.500 3 8.500v34q0 6 6 6h34q6 0 6-6V17" />
        <path d="m20 33 2.500-6L41 8.500l4 4L26 31z" fill="#666" strokeWidth="0.500" />
        <path d="M46.500 6 47 5.500" strokeWidth="6" strokeLinecap="round" />
      </>
    ),
  },
  {
    label: "功能",
    icon: (
      <>
        <rect x="4" y="4" width="19" height="19" rx="3" />
        <rect x="4" y="28" width="19" height="19" rx="3" />
        <rect x="28" y="28" width="19" height="19" rx="3" />
        <rect x="30" y="5.500" width="15.500" height="15.500" rx="2.500" transform="rotate(45 37.800 13.300)" />
      </>
    ),
  },
  {
    label: "设自选",
    icon: (
      <>
        <circle cx="26" cy="26" r="23.800" />
        <path d="M15.500 26h.01M26 26h.01M36.500 26h.01" strokeWidth="5.500" strokeLinecap="round" />
      </>
    ),
  },
];

const BottomNav = () => (
  <div className="flex h-[119px] border-t border-[#d6d9dd] bg-[#f6f8fa] text-[30.500px] leading-[40px] text-[#666]">
    <div className="flex w-[240px] flex-col items-center">
      <svg width="19" height="6" viewBox="0 0 19 6" fill="#777" className="mt-[8px]">
        <path d="M0 6h19L9.500 0z" />
      </svg>
      <span className="mt-[6px] text-[34.500px] leading-[42px] tracking-[-1.200px] text-[#0c990c]">3727.29</span>
      <div className="flex w-full items-center justify-between pl-[36px]">
        <span className="leading-[42px]">上证</span>
        <span className="text-[33px] leading-[42px] text-[#0c990c]">-0.02%</span>
      </div>
    </div>
    {navItems.map((item) => (
      <div key={item.label} className="flex w-[210px] flex-col items-center pt-[8px]">
        <svg width="52" height="52" viewBox="0 0 52 52" fill="none" stroke="#666" strokeWidth="2.300" className="overflow-visible">
          {item.icon}
        </svg>
        <span className="mt-[10px]">{item.label}</span>
      </div>
    ))}
  </div>
);

const App = () => {
  return (
    <div className="h-[2400px] w-[1080px] overflow-hidden bg-white font-['Noto_Sans_CJK_SC',sans-serif]">
      <StatusBar />
      <Header />
      <div className="flex h-[105px] items-center justify-between bg-[#fceee5] pr-[39px] pl-[32px] text-[#e0590f]">
        <p className="pb-[5px] text-[37px] leading-none">一键开通科创成长层权限！把握打新、交易机会</p>
        <Close size={28} color="#e0590f" width={2.8} />
      </div>
      <Quote />
      <div className="mx-[21px] h-px bg-[#eee]" />
      <BShare />
      <Notice />
      <PeriodTabs />
      <div className="flex h-[54px] items-center pb-[3px] pl-[12px] text-[30.500px] leading-none text-[#d92b2b]">
        <span className="text-[#f0bb4a]">
          均价：<span className="tracking-[0.600px]">24.23</span>
        </span>
        <span className="ml-[9px]">
          最新：<span className="tracking-[0.800px]">24.99</span>
        </span>
        <span className="ml-[19px]">2.01</span>
        <span className="ml-[18px] tracking-[0.200px]">8.75%</span>
      </div>
      <PriceChart />
      <VolumeHeader />
      <VolumeChart />
      <div className="mx-[11px] flex h-[54px] items-center border-b-2 border-[#e2e2e2] pb-[4px] pl-[6px] text-[33.500px] leading-none text-[#999]">
        {sessions.map((s) => (
          <span key={s.date} className="w-[211.600px] shrink-0 text-center">
            {s.date}
          </span>
        ))}
      </div>
      <Marquee />
      <InfoTabs />
      <Cards />
      <BottomNav />
      <div className="flex h-[42px] justify-center pt-[13px] pr-[7px]">
        <span className="h-[10px] w-[381px] rounded-full bg-[#333]" />
      </div>
    </div>
  );
};

export default App;
